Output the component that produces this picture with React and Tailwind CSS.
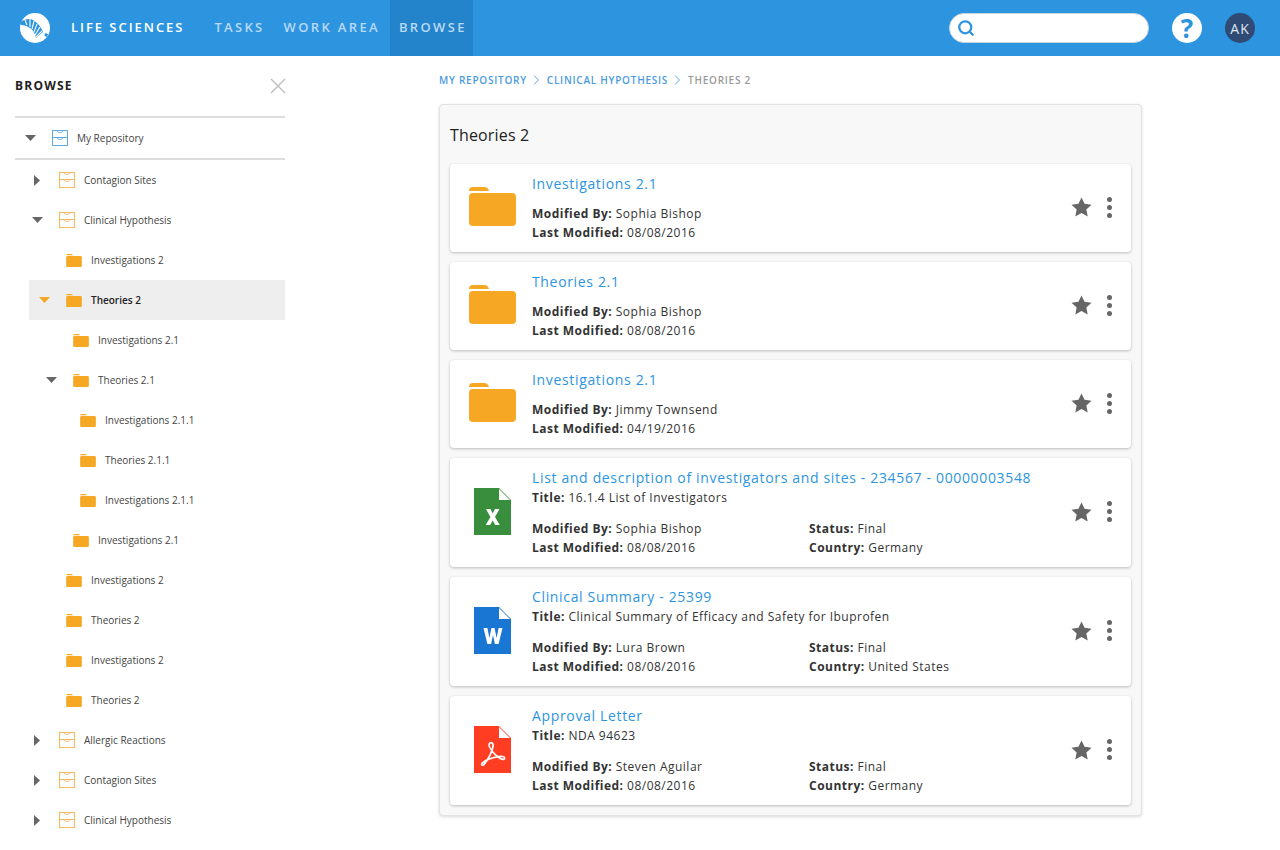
import { Search } from 'lucide-react'

const tree = [
  { label: 'Contagion Sites', level: 1, type: 'drawer', caret: 'right' },
  { label: 'Clinical Hypothesis', level: 1, type: 'drawer', caret: 'down' },
  { label: 'Investigations 2', level: 2, type: 'folder' },
  { label: 'Theories 2', level: 2, type: 'folder', caret: 'down', active: true },
  { label: 'Investigations 2.1', level: 3, type: 'folder' },
  { label: 'Theories 2.1', level: 3, type: 'folder', caret: 'down' },
  { label: 'Investigations 2.1.1', level: 4, type: 'folder' },
  { label: 'Theories 2.1.1', level: 4, type: 'folder' },
  { label: 'Investigations 2.1.1', level: 4, type: 'folder' },
  { label: 'Investigations 2.1', level: 3, type: 'folder' },
  { label: 'Investigations 2', level: 2, type: 'folder' },
  { label: 'Theories 2', level: 2, type: 'folder' },
  { label: 'Investigations 2', level: 2, type: 'folder' },
  { label: 'Theories 2', level: 2, type: 'folder' },
  { label: 'Allergic Reactions', level: 1, type: 'drawer', caret: 'right' },
  { label: 'Contagion Sites', level: 1, type: 'drawer', caret: 'right' },
  { label: 'Clinical Hypothesis', level: 1, type: 'drawer', caret: 'right' },
]

const indent = { 1: 'pl-0', 2: 'pl-[7px]', 3: 'pl-[14px]', 4: 'pl-[21px]' }

const cards = [
  { kind: 'folder', name: 'Investigations 2.1', by: 'Sophia Bishop', date: '08/08/2016' },
  { kind: 'folder', name: 'Theories 2.1', by: 'Sophia Bishop', date: '08/08/2016' },
  { kind: 'folder', name: 'Investigations 2.1', by: 'Jimmy Townsend', date: '04/19/2016' },
  { kind: 'xls', name: 'List and description of investigators and sites - 234567 - 00000003548', title: '16.1.4 List of Investigators', by: 'Sophia Bishop', date: '08/08/2016', status: 'Final', country: 'Germany' },
  { kind: 'doc', name: 'Clinical Summary - 25399', title: 'Clinical Summary of Efficacy and Safety for Ibuprofen', by: 'Lura Brown', date: '08/08/2016', status: 'Final', country: 'United States' },
  { kind: 'pdf', name: 'Approval Letter', title: 'NDA 94623', by: 'Steven Aguilar', date: '08/08/2016', status: 'Final', country: 'Germany' },
]

function Logo() {
  return (
    <svg width="30" height="30" viewBox="0 0 30 30" className="shrink-0">
      <circle cx="15" cy="15" r="15" fill="#fff" />
      {/* helix band */}
      <path d="M0 9 C5 6 10 5 13 7 C18 10 21 14 23 19 L16 25 C15 20 13 17 10 15 C7 13 4 12 1 12 Z" fill="#2d95e0" />
      <path d="M5 7 L7 12 M10 6 L10 14 M14 8 L12 16 M17 11 L14 19 M20 14 L15 22 M22 18 L16 24" stroke="#fff" strokeWidth="1.1" />
      <path d="M25 20 L28 21 L27 24 L24.5 23 Z" fill="#2d95e0" />
    </svg>
  )
}

function Caret({ dir, active }) {
  const color = active ? '#f6a723' : '#666666'
  if (dir === 'right') {
    return (
      <svg width="6" height="11" viewBox="0 0 6 11"><path d="M0 0 L6 5.5 L0 11 Z" fill={color} /></svg>
    )
  }
  return (
    <svg width="11" height="6" viewBox="0 0 11 6"><path d="M0 0 L11 0 L5.5 6 Z" fill={color} /></svg>
  )
}

function FolderIcon({ w = 16, h = 13 }) {
  return (
    <svg width={w} height={h} viewBox="0 0 47 39" className="shrink-0">
      <path d="M0 4 Q0 0 4 0 H15 Q19 0 20 4 H0 Z" fill="#f6a723" />
      <rect x="0" y="6" width="47" height="33" rx="4" fill="#f6a723" />
    </svg>
  )
}

function DrawerIcon({ color }) {
  return (
    <svg width="16" height="16" viewBox="0 0 16 16" className="shrink-0" fill="none">
      <rect x="0.5" y="0.5" width="15" height="15" stroke={color} />
      <path d="M0.5 7.5 H15.5" stroke={color} />
      <path d="M5.5 1 Q5.5 2.5 7 2.5 H9 Q10.5 2.5 10.5 1 M5.5 8 Q5.5 9.5 7 9.5 H9 Q10.5 9.5 10.5 8" stroke={color} strokeOpacity="0.7" />
    </svg>
  )
}

function DocIcon({ color, children }) {
  return (
    <svg width="37" height="47" viewBox="0 0 37 47">
      <path d="M0 0 H25 L37 12 V47 H0 Z" fill={color} />
      <path d="M25 1 L36 12 H25 Z" fill="#fff" />
      {children}
    </svg>
  )
}

function CardIcon({ kind }) {
  if (kind === 'folder') return <div className="mb-[3px]"><FolderIcon w={47} h={39} /></div>
  if (kind === 'xls') {
    return (
      <div className="mb-[2px]">
        <DocIcon color="#388e3c">
          <path d="M12 21 H16.5 L18.7 25.5 L21 21 H25.5 L21 29 L25.8 37 H21.2 L18.7 32.4 L16.2 37 H11.7 L16.4 29 Z" fill="#fff" />
        </DocIcon>
      </div>
    )
  }
  if (kind === 'doc') {
    return (
      <div className="mb-[2px]">
        <DocIcon color="#1976d2">
          <path d="M9.5 21 H13.4 L15.4 31 L17.4 21 H20.6 L22.6 31 L24.6 21 H28.5 L24.6 37 H20.9 L19 28 L17.1 37 H13.4 Z" fill="#fff" />
        </DocIcon>
      </div>
    )
  }
  return (
    <div className="mb-[2px]">
      <DocIcon color="#ff3d23">
        <path
          d="M16 17 C18 15.8 19.5 18 19 20.5 C18 26 13.5 34 10 38.5 C8.3 40.3 6.8 38.5 8.5 36.8 C13 33 23 29.8 28.5 30.5 C31.5 31 31.2 33.8 28.5 33.3 C24 32.3 18 26 15.6 21 C14.8 19 15 17.8 16 17 Z"
          fill="none"
          stroke="#fff"
          strokeWidth="1.7"
        />
      </DocIcon>
    </div>
  )
}

function Meta({ label, value }) {
  return (
    <div className="h-[19px] leading-[19px] text-[12px] tracking-[0.04em] text-[#333333] whitespace-nowrap">
      <span className="font-bold">{label}:</span> {value}
    </div>
  )
}

function Card({ card }) {
  const isFile = card.kind !== 'folder'
  return (
    <div className={`flex bg-white rounded shadow-[0_1px_3px_rgba(0,0,0,0.25)] ${isFile ? 'h-[109px]' : 'h-[88px]'}`}>
      <div className="w-[82px] shrink-0 flex items-center justify-center pl-[3px]">
        <CardIcon kind={card.kind} />
      </div>
      <div className="flex-1 pt-[10px]">
        <div className="h-[20px] leading-[20px] text-[14px] tracking-[0.047em] text-[#2d95e0]">{card.name}</div>
        {isFile ? <Meta label="Title" value={card.title} /> : null}
        <div className={`flex ${isFile ? 'mt-[12px]' : 'mt-[10px]'}`}>
          <div className="w-[277px]">
            <Meta label="Modified By" value={card.by} />
            <Meta label="Last Modified" value={card.date} />
          </div>
          {isFile ? (
            <div>
              <Meta label="Status" value={card.status} />
              <Meta label="Country" value={card.country} />
            </div>
          ) : null}
        </div>
      </div>
      <div className="flex items-center gap-[15px] pr-[19px] mb-[2px]">
        <svg width="21" height="20" viewBox="0 0 22 21">
          <path d="M11 0.5 L14.2 7.2 L21.5 8.1 L16.1 13.1 L17.5 20.4 L11 16.8 L4.5 20.4 L5.9 13.1 L0.5 8.1 L7.8 7.2 Z" fill="#666666" />
        </svg>
        <div className="flex flex-col gap-[3px]">
          <span className="w-[5px] h-[5px] bg-[#666666] rounded-full" />
          <span className="w-[5px] h-[5px] bg-[#666666] rounded-full" />
          <span className="w-[5px] h-[5px] bg-[#666666] rounded-full" />
        </div>
      </div>
    </div>
  )
}

function Chevron() {
  return (
    <svg width="6" height="10" viewBox="0 0 6 10" className="ml-[6px] mr-[8px]" fill="none">
      <path d="M1 0.5 L5.5 5 L1 9.5" stroke="#5a9fe0" />
    </svg>
  )
}

function TreeRow({ row }) {
  return (
    <div className={`h-[40px] flex items-center ml-[14px] ${row.active ? 'bg-[#eeeeee]' : ''} ${indent[row.level]}`}>
      <div className="w-[16px] flex justify-center shrink-0">
        {row.caret ? <Caret dir={row.caret} active={row.active} /> : null}
      </div>
      <div className="w-[25px] ml-[14px] flex items-center shrink-0">
        {row.type === 'folder' ? <FolderIcon /> : <DrawerIcon color="#f9b65a" />}
      </div>
      <span className={`text-[10px] ${row.active ? 'text-[#222222] font-semibold' : 'text-[#444444]'}`}>{row.label}</span>
    </div>
  )
}

export default function App() {
  return (
    <div className="font-['Open_Sans',sans-serif] bg-white h-[850px] overflow-hidden">
      <header className="h-[56px] bg-[#2d95e0] flex items-center">
        <div className="pl-[20px] w-[71px]"><Logo /></div>
        <span className="text-[13px] font-semibold text-white tracking-[0.15em] whitespace-nowrap">LIFE SCIENCES</span>
        <nav className="flex h-full ml-[21px] text-[13px] font-semibold text-[#b9d9f5] tracking-[0.18em]">
          <div className="flex items-center px-[9px]">TASKS</div>
          <div className="flex items-center pl-[10px] pr-[9px]">WORK AREA</div>
          <div className="flex items-center pl-[9px] pr-[6px] ml-[1px] bg-[#2484cb]">BROWSE</div>
        </nav>
        <div className="ml-auto flex items-center">
          <div className="w-[200px] h-[30px] bg-white rounded-full border border-[#c9d5dd] flex items-center pl-[7px]">
            <Search size={18} strokeWidth={3} color="#2d95e0" />
          </div>
          <div className="w-[30px] h-[30px] ml-[23px] rounded-full bg-white flex items-center justify-center text-[26px] font-bold text-[#2d95e0]">?</div>
          <div className="w-[30px] h-[30px] ml-[23px] mr-[25px] rounded-full bg-[#2f4b75] flex items-center justify-center text-[14px] tracking-[0.08em] text-[#dfe6ee]">AK</div>
        </div>
      </header>

      <div className="flex">
        <aside className="w-[285px] ml-[15px] shrink-0">
          <div className="w-[270px]">
            <div className="h-[60px] flex items-center justify-between">
              <span className="text-[12px] font-bold tracking-[0.1em] text-[#222222]">BROWSE</span>
              <svg width="16" height="16" viewBox="0 0 16 16" fill="none" className="translate-x-[1px]">
                <path d="M1 1 L15 15 M15 1 L1 15" stroke="#bdbdbd" strokeWidth="1.4" />
              </svg>
            </div>
            <div className="h-[44px] border-y-2 border-[#dddddd] flex items-center">
              <div className="w-[30px] flex justify-center"><Caret dir="down" /></div>
              <div className="ml-[7px]"><DrawerIcon color="#5aa9e6" /></div>
              <span className="ml-[9px] text-[10px] text-[#444444]">My Repository</span>
            </div>
            <div>
              {tree.map((row, i) => <TreeRow key={i} row={row} />)}
            </div>
          </div>
        </aside>

        <main className="ml-[139px] w-[703px] shrink-0">
          <div className="h-[48px] flex items-center text-[10px] font-semibold tracking-[0.075em]">
            <span className="text-[#4a9be0]">MY REPOSITORY</span>
            <Chevron />
            <span className="text-[#4a9be0]">CLINICAL HYPOTHESIS</span>
            <Chevron />
            <span className="text-[#999999]">THEORIES 2</span>
          </div>
          <section className="bg-[#f8f8f8] border border-[#e2e2e2] rounded-sm shadow-[0_1px_3px_rgba(0,0,0,0.15)] px-[10px] pb-[10px]">
            <h1 className="h-[59px] flex items-center text-[16px] font-normal tracking-[0.01em] text-[#222222]">Theories 2</h1>
            <div className="flex flex-col gap-[10px]">
              {cards.map((c, i) => <Card key={i} card={c} />)}
            </div>
          </section>
        </main>
      </div>
    </div>
  )
}
